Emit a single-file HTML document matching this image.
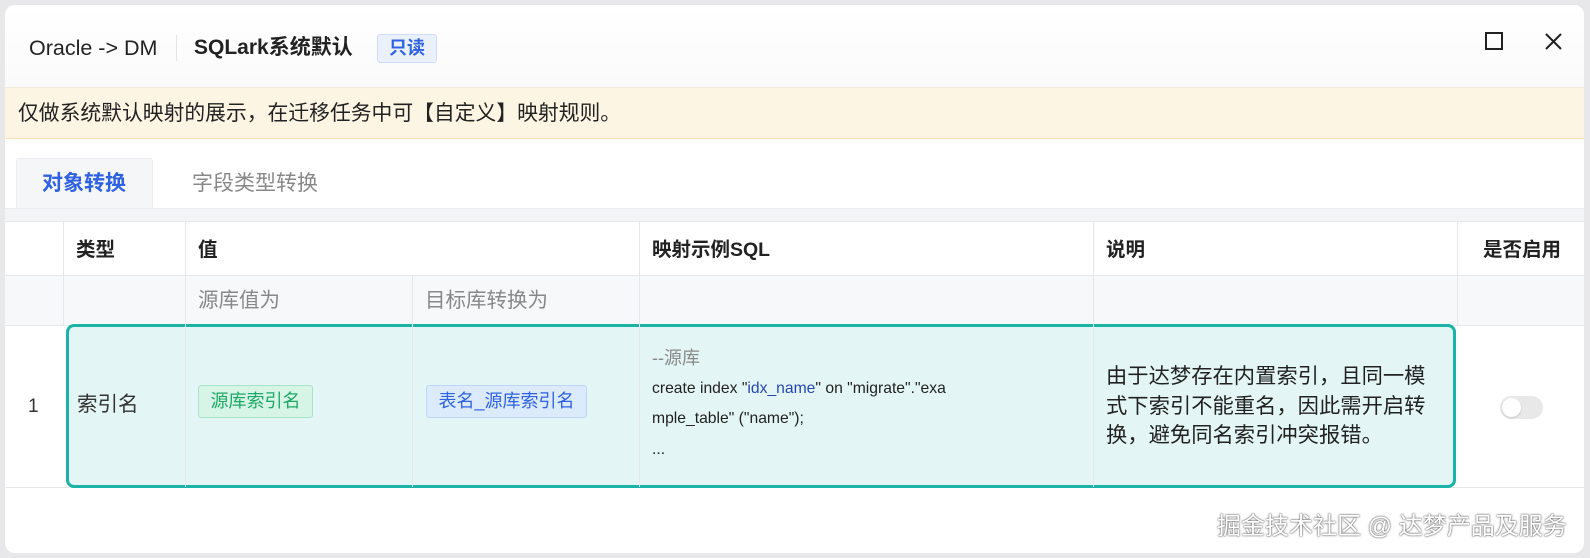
<!DOCTYPE html>
<html><head><meta charset="utf-8"><style>
*{margin:0;padding:0;box-sizing:border-box}
body{width:1590px;height:558px;background:#e8e8ea;font-family:"Liberation Sans","Noto Sans CJK SC",sans-serif;position:relative;overflow:hidden;color:#222}
.card{position:absolute;left:5px;top:5px;width:1579px;height:548px;background:#fff;border-radius:10px;overflow:hidden}
.a{position:absolute;white-space:nowrap}
.vl{position:absolute;width:1px;background:#e6e7ea}
.hl{position:absolute;height:1px;background:#e6e7ea;left:0;width:1579px}
</style></head><body>
<div class="card">
  <div class="a" style="left:0;top:0;width:1579px;height:82px;background:linear-gradient(#fff,#fafafa)"></div>
  <div class="a" style="left:24px;top:31px;font-size:21.5px;line-height:24px;color:#222">Oracle -&gt; DM</div>
  <div class="a" style="left:171px;top:30px;width:1px;height:26px;background:#e5e5e5"></div>
  <div class="a" style="left:189px;top:31px;font-size:21px;line-height:24px;font-weight:bold;color:#222">SQLark系统默认</div>
  <div class="a" style="left:372px;top:29px;width:60px;height:29px;background:#eaf1fd;border:1px solid #cfdcf7;border-radius:3px;color:#2f62e0;font-size:18px;font-weight:bold;text-align:center;line-height:27px">只读</div>
  <div class="a" style="left:1480px;top:27px;width:18px;height:18px;border:2px solid #222"></div>
  <svg class="a" style="left:1539px;top:27px" width="19" height="19" viewBox="0 0 19 19"><path d="M2 2L17 17M17 2L2 17" stroke="#222" stroke-width="2"/></svg>
  <div class="a" style="left:0;top:82px;width:1579px;height:52px;background:#fcf5e3;border-top:1px solid #f0ead8;border-bottom:1px solid #f5e0b8"></div>
  <div class="a" style="left:13px;top:96px;font-size:20.8px;line-height:26px;color:#222">仅做系统默认映射的展示，在迁移任务中可【自定义】映射规则。</div>
  <div class="a" style="left:11px;top:153px;width:137px;height:51px;background:#f5f6f8;border:1px solid #eceef1;border-bottom:none;border-radius:3px 3px 0 0"></div>
  <div class="a" style="left:37px;top:166px;font-size:21px;line-height:26px;font-weight:bold;color:#2f62e0">对象转换</div>
  <div class="a" style="left:187px;top:166px;font-size:21px;line-height:26px;color:#888">字段类型转换</div>
  <div class="a" style="left:0;top:203px;width:1579px;height:13px;background:#f3f4f6;border-top:1px solid #eaebee"></div>
  <div class="a" style="left:0;top:270px;width:1579px;height:50px;background:#f7f8fa"></div>
  <div class="hl" style="top:216px"></div>
  <div class="hl" style="top:270px"></div>
  <div class="hl" style="top:320px"></div>
  <div class="hl" style="top:482px"></div>
  <div class="a" style="left:61px;top:319px;width:1390px;height:164px;background:#e3f6f5;border:3px solid #1ab3a6;border-radius:8px"></div>
  <div class="vl" style="left:58px;top:216px;height:104px"></div>
  <div class="vl" style="left:180px;top:216px;height:266px"></div>
  <div class="vl" style="left:407px;top:270px;height:212px"></div>
  <div class="vl" style="left:634px;top:216px;height:266px"></div>
  <div class="vl" style="left:1088px;top:216px;height:266px"></div>
  <div class="vl" style="left:1452px;top:216px;height:104px"></div>
  <div class="a" style="left:71px;top:233px;font-size:19.5px;line-height:24px;font-weight:bold">类型</div>
  <div class="a" style="left:193px;top:233px;font-size:19.5px;line-height:24px;font-weight:bold">值</div>
  <div class="a" style="left:647px;top:233px;font-size:19.5px;line-height:24px;font-weight:bold">映射示例SQL</div>
  <div class="a" style="left:1101px;top:233px;font-size:19.5px;line-height:24px;font-weight:bold">说明</div>
  <div class="a" style="left:1478px;top:233px;font-size:19.5px;line-height:24px;font-weight:bold">是否启用</div>
  <div class="a" style="left:193px;top:283px;font-size:20.5px;line-height:26px;color:#888">源库值为</div>
  <div class="a" style="left:420px;top:283px;font-size:20.5px;line-height:26px;color:#888">目标库转换为</div>
  <div class="a" style="left:23px;top:391px;font-size:19px;color:#333">1</div>
  <div class="a" style="left:72px;top:387px;font-size:20.5px;line-height:26px;color:#333">索引名</div>
  <div class="a" style="left:193px;top:380px;width:115px;height:33px;background:#d6f5e6;border:1px solid #a7e3c6;border-radius:3px;color:#1ea865;font-size:18px;line-height:31px;text-align:center">源库索引名</div>
  <div class="a" style="left:421px;top:380px;width:161px;height:33px;background:#dcebfc;border:1px solid #bcd6f5;border-radius:3px;color:#2f62e0;font-size:18px;line-height:31px;text-align:center">表名_源库索引名</div>
  <div class="a" style="left:647px;top:338px;font-size:15.7px;line-height:30.5px;color:#222">
    <div style="color:#888;font-size:18px">--源库</div>
    <div>create index "<span style="color:#2546b0">idx_name</span>" on "migrate"."exa</div>
    <div>mple_table" ("name");</div>
    <div>...</div>
  </div>
  <div class="a" style="left:1101px;top:357px;font-size:21.3px;line-height:29.5px;color:#222">
    <div>由于达梦存在内置索引，且同一模</div>
    <div>式下索引不能重名，因此需开启转</div>
    <div>换，避免同名索引冲突报错。</div>
  </div>
  <div class="a" style="left:1495px;top:391px;width:43px;height:23px;border-radius:12px;background:#e8e8e8"></div>
  <div class="a" style="left:1497px;top:393px;width:19px;height:19px;border-radius:50%;background:#fff;box-shadow:0 1px 2px rgba(0,0,0,.15)"></div>
  <div class="a" style="left:1212px;top:507px;font-size:24px;line-height:30px;color:#fff;text-shadow:0 0 2px #555,0 0 1px #555">掘金技术社区 @ 达梦产品及服务</div>
</div>
</body></html>
